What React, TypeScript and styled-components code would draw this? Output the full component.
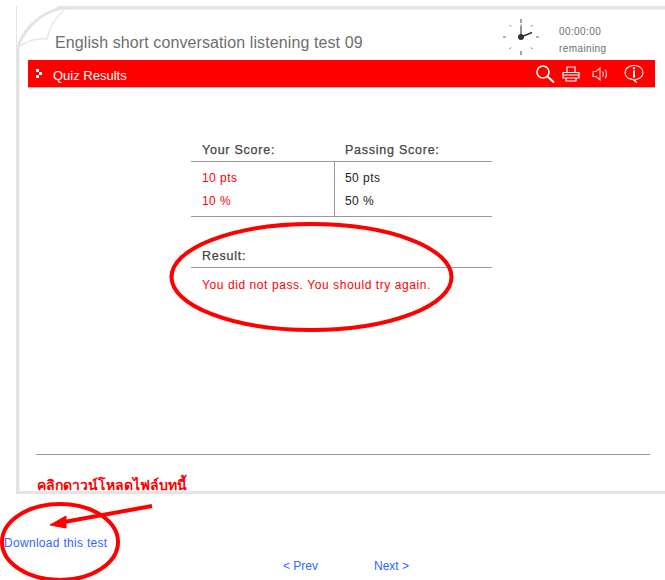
import React from "react";
import styled, { createGlobalStyle } from "styled-components";

const Global = createGlobalStyle`
  html, body { margin: 0; padding: 0; background: #fff; }
  body { font-family: "Liberation Sans", Arial, sans-serif; }
`;

const Page = styled.div`
  position: relative;
  width: 665px;
  height: 580px;
  overflow: hidden;
  background: #fff;
  box-sizing: border-box;
  padding-top: 6px;
`;

const Card = styled.div`
  position: relative;
  box-sizing: border-box;
  width: 649px;
  height: 488px;
  margin-left: 16px;
  border: solid #e4e4e4;
  border-width: 3px 0 3px 3px;
  box-shadow: inset 1px 1px 0 #f0f0f0;
  padding: 0 0 0 9px;
  display: flex;
  flex-direction: column;
`;

const Header = styled.header`
  height: 51px;
  flex: none;
  display: flex;
  align-items: flex-start;
`;

const Title = styled.h1`
  margin: 25px 0 0 27px;
  width: 447px;
  font-size: 16px;
  line-height: 18px;
  font-weight: 400;
  letter-spacing: 0.1px;
  color: #6e6e6e;
`;

const Timer = styled.div`
  margin: 9px 0 0 0;
  display: flex;
  align-items: flex-start;
  gap: 19px;
`;

const TimerText = styled.div`
  margin-top: 5px;
  font-size: 10px;
  line-height: 17px;
  letter-spacing: 0.4px;
  color: #6e6e6e;
`;

const Bar = styled.div`
  width: 627px;
  height: 27px;
  box-sizing: border-box;
  background: #ff0000;
  box-shadow: 0 1px 0 #e8b0b0;
  display: flex;
  align-items: center;
  padding: 0 11px 0 8px;
  flex: none;
`;

const BarTitle = styled.span`
  margin-left: 10px;
  margin-top: 4px;
  font-size: 13px;
  color: #fff;
  flex: 1;
`;

const BarIcon = styled.span<{ $gap: number }>`
  display: block;
  height: 20px;
  margin-left: ${(p) => p.$gap}px;
  & > svg {
    display: block;
  }
`;

const Content = styled.main`
  width: 301px;
  margin: 52px 0 0 163px;
  font-size: 12px;
  letter-spacing: 0.45px;
  flex: none;
`;

const ScoreHead = styled.div`
  display: grid;
  grid-template-columns: 143px 1fr;
  height: 22px;
  border-bottom: 1px solid #999;
`;

const Heading = styled.div`
  padding-left: 11px;
  font-size: 12.5px;
  line-height: 22px;
  letter-spacing: 0.75px;
  -webkit-text-stroke: 0.25px #444;
  color: #444;
`;

const ScoreBody = styled.div`
  display: grid;
  grid-template-columns: 143px 1fr;
  height: 54px;
  border-bottom: 1px solid #999;
`;

const ScoreCell = styled.div<{ $fail?: boolean }>`
  padding: 5px 0 0 11px;
  line-height: 23px;
  color: ${(p) => (p.$fail ? "#f00" : "#222")};
  & + & {
    border-left: 1px solid #999;
    padding-left: 10px;
  }
`;

const ResultHead = styled.div`
  margin-top: 27px;
  height: 23px;
  border-bottom: 1px solid #999;
`;

const ResultHeading = styled(Heading)`
  line-height: 24px;
`;

const ResultText = styled.p`
  margin: 9px 0 0 11px;
  line-height: 16px;
  color: #f00;
  letter-spacing: 0.58px;
`;

const Footer = styled.div`
  margin: 161px 0 0 8px;
  border-top: 1px solid #999;
  padding: 21px 0 0 1px;
  flex: 1;
  min-height: 0;
  width: 614px;
  box-sizing: border-box;
`;

const Thai = styled.div`
  font-family: "Noto Sans", "Liberation Sans", "Noto Sans CJK SC", sans-serif;
  font-size: 14px;
  font-weight: 700;
  line-height: 18px;
  color: #f00;
`;

const Below = styled.div`
  padding: 39px 0 0 4px;
`;

const Link = styled.a<{ $wide?: boolean }>`
  font-size: 12px;
  color: #3366ff;
  text-decoration: none;
  line-height: 14px;
  display: inline-block;
  letter-spacing: ${(p) => (p.$wide ? "0.3px" : "0")};
`;

const Pager = styled.nav`
  display: flex;
  gap: 56px;
  padding: 8px 0 0 283px;
`;

const Overlay = styled.svg`
  position: absolute;
  left: 0;
  top: 0;
  pointer-events: none;
`;

const Clock = () => (
  <svg width="38" height="38" viewBox="0 0 38 38" style={{ display: "block" }}>
    <g stroke="#666" strokeWidth="1.2">
      <path d="M19 1v4M19 33v4M1 19h3M34 19h3" />
      <path d="M7.500 7l1.500 1.500M30.500 7L29 8.500M7.500 31l1.500-1.500M30.500 31L29 29.500" strokeWidth="1" />
    </g>
    <path d="M19 19V6" stroke="#e8a0a0" strokeWidth="1.2" />
    <path d="M19 19V8" stroke="#555" strokeWidth="1" />
    <path d="M19 19l11-4.500" stroke="#333" strokeWidth="1.4" />
    <circle cx="19" cy="19" r="3" fill="#333" />
  </svg>
);

const Search = () => (
  <svg width="20" height="20" viewBox="0 0 20 20" fill="none" stroke="#fff">
    <circle cx="8" cy="8" r="6" strokeWidth="1.6" />
    <path d="M12.500 12.500L19 18.500" strokeWidth="2" />
  </svg>
);

const Printer = () => (
  <svg width="18" height="20" viewBox="0 0 18 20" fill="none" stroke="#fff" strokeWidth="1.2">
    <path d="M5 8V3h8v5M1 8.500h16v5.500H1zM4 14v3h10v-3M1 11h16" />
  </svg>
);

const Speaker = () => (
  <svg width="16" height="20" viewBox="0 0 16 20" fill="none" stroke="#ffc4c4" strokeWidth="1.2">
    <path d="M1 7.500h3L8 4v12L4 12.500H1zM10.500 7.500c1 1.500 1 3.500 0 5M13 5.500c2 2.500 2 6.500 0 9" />
  </svg>
);

const Info = () => (
  <svg width="20" height="20" viewBox="0 0 20 20" fill="none" stroke="#fff">
    <path d="M10 1.500c5 0 9 2.800 9 7s-4 7-8 7l1 2.500-3.500-2.600C4.500 15 1 12.500 1 8.500s4-7 9-7z" strokeWidth="1.100" />
    <path d="M10 6.500v7" strokeWidth="2" />
    <circle cx="10" cy="4.300" r="1.100" fill="#fff" stroke="none" />
  </svg>
);

export default function App() {
  return (
    <>
      <Global />
      <Page>
        <Card>
          <Header>
            <Title>English short conversation listening test 09</Title>
            <Timer>
              <Clock />
              <TimerText>
                00:00:00
                <br />
                remaining
              </TimerText>
            </Timer>
          </Header>
          <Bar>
            <svg width="7" height="9" viewBox="0 0 7 9">
              <path d="M0 0h3v3H0zM3 3h3v3H3zM0 6h3v3H0z" fill="#fff" />
            </svg>
            <BarTitle>Quiz Results</BarTitle>
            <BarIcon $gap={0}>
              <Search />
            </BarIcon>
            <BarIcon $gap={7}>
              <Printer />
            </BarIcon>
            <BarIcon $gap={12}>
              <Speaker />
            </BarIcon>
            <BarIcon $gap={16}>
              <Info />
            </BarIcon>
          </Bar>
          <Content>
            <ScoreHead>
              <Heading>Your Score:</Heading>
              <Heading>Passing Score:</Heading>
            </ScoreHead>
            <ScoreBody>
              <ScoreCell $fail>
                10 pts
                <br />
                10 %
              </ScoreCell>
              <ScoreCell>
                50 pts
                <br />
                50 %
              </ScoreCell>
            </ScoreBody>
            <ResultHead>
              <ResultHeading>Result:</ResultHeading>
            </ResultHead>
            <ResultText>You did not pass. You should try again.</ResultText>
          </Content>
          <Footer>
            <Thai>คลิกดาวน์โหลดไฟล์บทนี้</Thai>
          </Footer>
        </Card>
        <Below>
          <Link href="#" $wide>
            Download this test
          </Link>
        </Below>
        <Pager>
          <Link href="#">&lt; Prev</Link>
          <Link href="#">Next &gt;</Link>
        </Pager>
        <Overlay width="665" height="580" viewBox="0 0 665 580" fill="none">
          <path d="M0 0H64L17 48V0Z" fill="#fff" />
          <path d="M18 47C24 28 42 11 64 8" stroke="#e4e4e4" strokeWidth="3" />
          <path d="M19 47C27 41 37 38 47 39C49 28 56 17 65 9" fill="#fff" stroke="#e8e8e8" strokeWidth="1.500" />
          <ellipse cx="311.500" cy="277" rx="140" ry="53" stroke="#f00" strokeWidth="4" />
          <ellipse cx="60" cy="542" rx="58" ry="38" stroke="#f00" strokeWidth="4" />
          <path d="M152 506L64 522" stroke="#f00" strokeWidth="4" />
          <path d="M50 525L66 516L66 528Z" fill="#f00" stroke="#f00" />
        </Overlay>
      </Page>
    </>
  );
}
